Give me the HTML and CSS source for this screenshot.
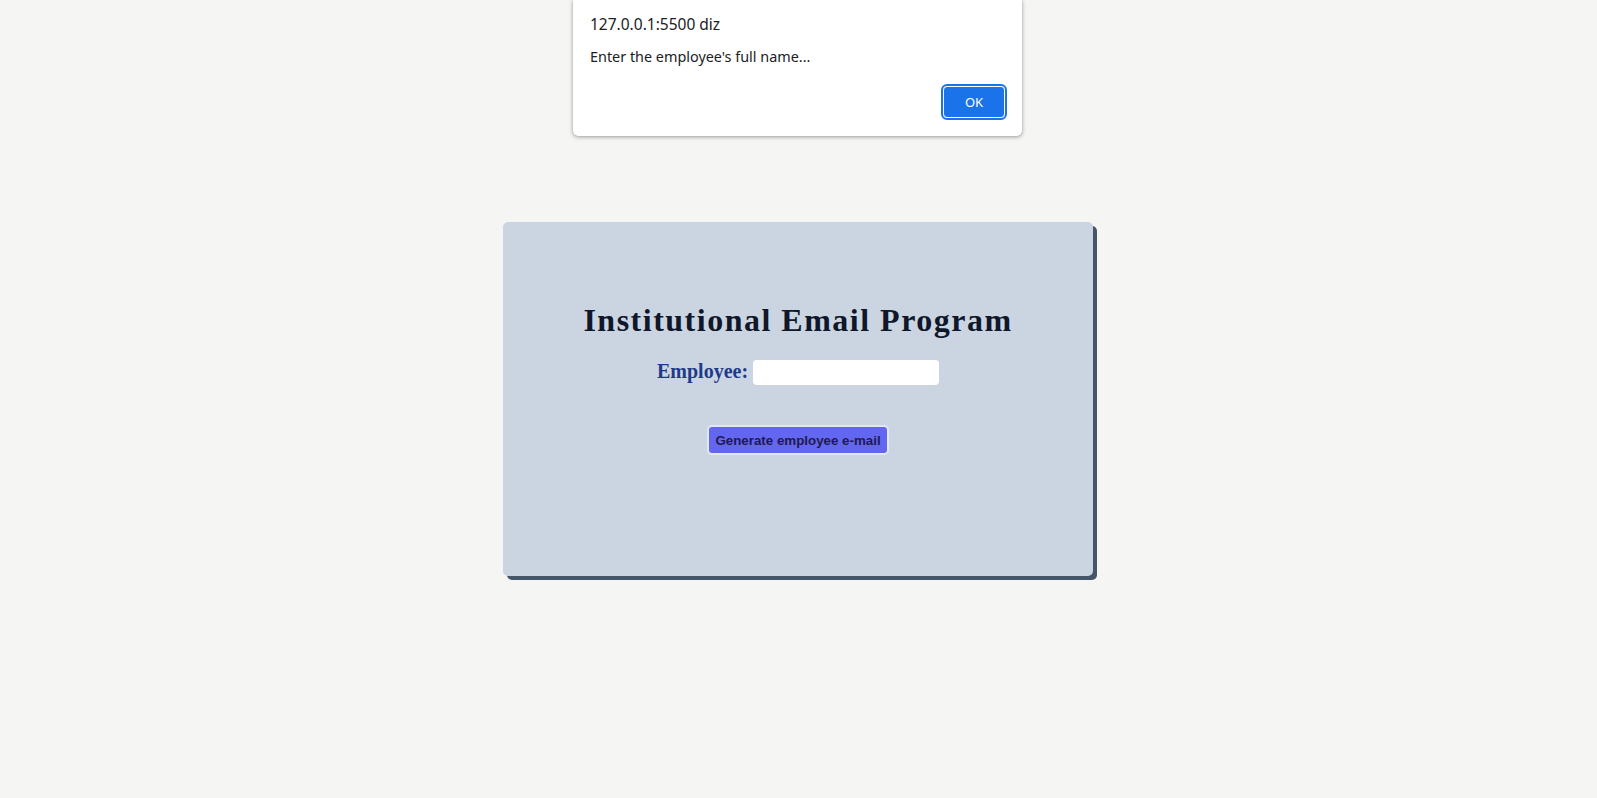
FILE: index.html
```html
<!DOCTYPE html>
<html lang="en">
<head>
<meta charset="utf-8">
<title>Institutional Email Program</title>
<link rel="stylesheet" href="styles.css">
</head>
<body>
  <div class="dialog">
    <div class="dialog-origin">127.0.0.1:5500 diz</div>
    <div class="dialog-msg">Enter the employee's full name...</div>
    <div class="dialog-actions">
      <button class="dialog-ok" type="button">OK</button>
    </div>
  </div>

  <main class="card">
    <h1 class="title">Institutional Email Program</h1>
    <div class="field">
      <label class="field-label" for="emp">Employee:</label>
      <input class="field-input" id="emp" type="text">
    </div>
    <button class="generate" type="button">Generate employee e-mail</button>
  </main>
</body>
</html>
```

FILE: styles.css
```css
html, body {
  margin: 0;
  padding: 0;
}

body {
  background: #f5f5f4;
  height: 100vh;
  display: flex;
  align-items: center;
  justify-content: center;
  font-family: "Liberation Serif", serif;
}

.card {
  box-sizing: border-box;
  width: 590px;
  height: 354px;
  margin-right: 1px;
  background: #cbd5e1;
  border-radius: 5px;
  box-shadow: 4px 4px 0 #475569;
  padding-top: 80px;
  display: flex;
  flex-direction: column;
  align-items: center;
}

.title {
  margin: 0;
  font-size: 32px;
  line-height: 37px;
  font-weight: bold;
  letter-spacing: 1.5px;
  color: #0f172a;
}

.field {
  margin-top: 21px;
  display: flex;
  align-items: flex-start;
  gap: 5px;
}

.field-label {
  font-size: 20px;
  line-height: 23px;
  font-weight: bold;
  color: #1e3a8a;
}

.field-input {
  box-sizing: border-box;
  width: 186px;
  height: 25px;
  border: none;
  border-radius: 4px;
  background: #ffffff;
  padding: 0 4px;
  outline: none;
}

.generate {
  box-sizing: border-box;
  margin-top: 40px;
  height: 30px;
  padding: 0 6px;
  white-space: nowrap;
  background: #6366f1;
  border: 2px solid #e2e8f0;
  border-radius: 5px;
  font-family: "Liberation Sans", Arial, sans-serif;
  font-size: 13.33px;
  font-weight: bold;
  color: #1e1b4b;
}

.dialog {
  position: absolute;
  top: 0;
  left: 573px;
  width: 449px;
  height: 136px;
  box-sizing: border-box;
  background: #ffffff;
  border-radius: 0 0 5px 5px;
  box-shadow: 0 1px 4px rgba(0, 0, 0, 0.35), 0 0 1px rgba(0, 0, 0, 0.3);
  padding: 13px 15px 0 17px;
  font-family: "Noto Sans", "Open Sans", sans-serif;
  color: #202124;
}

.dialog-origin {
  font-size: 15.5px;
  line-height: 22px;
}

.dialog-msg {
  margin-top: 12px;
  font-size: 14.4px;
  line-height: 20px;
}

.dialog-actions {
  margin-top: 19px;
  display: flex;
  justify-content: flex-end;
}

.dialog-ok {
  box-sizing: border-box;
  width: 62px;
  height: 32px;
  background: #1a73e8;
  border: 1px solid #ffffff;
  border-radius: 4px;
  outline: 2px solid #1a73e8;
  outline-offset: 0;
  color: #ffffff;
  font-family: "Noto Sans", "Open Sans", sans-serif;
  font-size: 13px;
  margin-right: 2px;
}
```
